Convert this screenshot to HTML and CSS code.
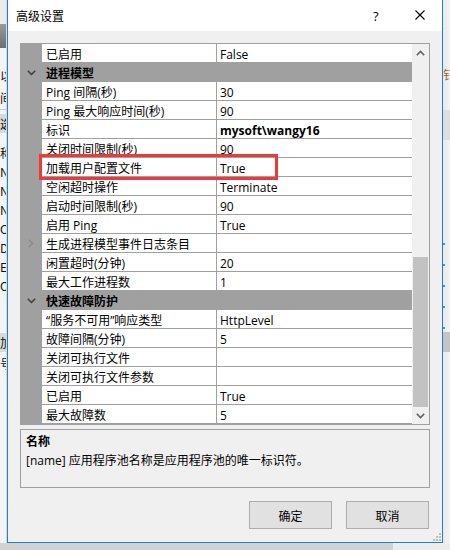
FILE: index.html
```html
<!DOCTYPE html>
<html lang="zh-CN">
<head>
<meta charset="utf-8">
<title>高级设置</title>
<link rel="stylesheet" href="styles.css">
</head>
<body>
<div class="screen">
  <div class="main">
    <div class="bg-left">
      <div class="bl-top"></div>
      <div class="bl-icon"></div>
      <div class="bl-gap1"></div>
      <div class="bl-line">以</div>
      <div class="bl-line bl-mt3">间</div>
      <div class="bl-sep"></div>
      <div class="bl-line bl-sel">选:</div>
      <div class="bl-line bl-mt10">称</div>
      <div class="bl-line">N</div>
      <div class="bl-line">N</div>
      <div class="bl-line">N</div>
      <div class="bl-line">Cl</div>
      <div class="bl-line">Do</div>
      <div class="bl-line">EF</div>
      <div class="bl-line">O</div>
      <div class="bl-line bl-sel bl-mt38">加</div>
      <div class="bl-line bl-mt2">号</div>
    </div>

    <div class="dialog">
      <div class="titlebar">
        <span class="title">高级设置</span>
        <span class="help">?</span>
        <svg class="close" width="10" height="10" viewBox="0 0 10 10"><path d="M0.5 0.5 L9.5 9.5 M9.5 0.5 L0.5 9.5" stroke="#000" stroke-width="1.1" fill="none"/></svg>
      </div>

      <div class="content">
        <div class="grid">
          <div class="rows">
            <div class="row"><div class="m"></div><div class="n">已启用</div><div class="v">False</div></div>
            <div class="cat"><div class="m"><svg width="9" height="6" viewBox="0 0 9 6"><path d="M0.8 0.8 L4.5 4.5 L8.2 0.8" stroke="#3c3c3c" stroke-width="1.5" fill="none"/></svg></div><div class="ct">进程模型</div></div>
            <div class="row"><div class="m"></div><div class="n">Ping 间隔(秒)</div><div class="v">30</div></div>
            <div class="row"><div class="m"></div><div class="n">Ping 最大响应时间(秒)</div><div class="v">90</div></div>
            <div class="row"><div class="m"></div><div class="n">标识</div><div class="v bold">mysoft\wangy16</div></div>
            <div class="row"><div class="m"></div><div class="n">关闭时间限制(秒)</div><div class="v">90</div></div>
            <div class="row"><div class="m"></div><div class="n">加载用户配置文件</div><div class="v">True</div></div>
            <div class="row"><div class="m"></div><div class="n">空闲超时操作</div><div class="v">Terminate</div></div>
            <div class="row"><div class="m"></div><div class="n">启动时间限制(秒)</div><div class="v">90</div></div>
            <div class="row"><div class="m"></div><div class="n">启用 Ping</div><div class="v">True</div></div>
            <div class="row"><div class="m"><svg width="6" height="9" viewBox="0 0 6 9"><path d="M0.8 0.8 L4.5 4.5 L0.8 8.2" stroke="#8a8a8a" stroke-width="1.5" fill="none"/></svg></div><div class="n">生成进程模型事件日志条目</div><div class="v"></div></div>
            <div class="row"><div class="m"></div><div class="n">闲置超时(分钟)</div><div class="v">20</div></div>
            <div class="row"><div class="m"></div><div class="n">最大工作进程数</div><div class="v">1</div></div>
            <div class="cat"><div class="m"><svg width="9" height="6" viewBox="0 0 9 6"><path d="M0.8 0.8 L4.5 4.5 L8.2 0.8" stroke="#3c3c3c" stroke-width="1.5" fill="none"/></svg></div><div class="ct">快速故障防护</div></div>
            <div class="row"><div class="m"></div><div class="n">“服务不可用”响应类型</div><div class="v">HttpLevel</div></div>
            <div class="row"><div class="m"></div><div class="n">故障间隔(分钟)</div><div class="v">5</div></div>
            <div class="row"><div class="m"></div><div class="n">关闭可执行文件</div><div class="v"></div></div>
            <div class="row"><div class="m"></div><div class="n">关闭可执行文件参数</div><div class="v"></div></div>
            <div class="row"><div class="m"></div><div class="n">已启用</div><div class="v">True</div></div>
            <div class="row"><div class="m"></div><div class="n">最大故障数</div><div class="v">5</div></div>
          </div>
          <div class="scrollbar">
            <div class="sb-btn"><svg width="9" height="6" viewBox="0 0 9 6"><path d="M0.8 5.2 L4.5 1.5 L8.2 5.2" stroke="#606060" stroke-width="1.6" fill="none"/></svg></div>
            <div class="sb-track"><div class="sb-thumb"></div></div>
            <div class="sb-btn"><svg width="9" height="6" viewBox="0 0 9 6"><path d="M0.8 0.8 L4.5 4.5 L8.2 0.8" stroke="#606060" stroke-width="1.6" fill="none"/></svg></div>
          </div>
          <div class="highlight"></div>
        </div>

        <div class="desc">
          <div class="desc-title">名称</div>
          <div class="desc-text">[name] 应用程序池名称是应用程序池的唯一标识符。</div>
        </div>

        <div class="buttons">
          <button class="btn">确定</button>
          <button class="btn">取消</button>
        </div>
      </div>

      <svg class="grip" width="9" height="9" viewBox="0 0 9 9">
        <rect x="7" y="1" width="2" height="2" fill="#bdbdbd"/>
        <rect x="4" y="4" width="2" height="2" fill="#bdbdbd"/>
        <rect x="7" y="4" width="2" height="2" fill="#bdbdbd"/>
        <rect x="1" y="7" width="2" height="2" fill="#bdbdbd"/>
        <rect x="4" y="7" width="2" height="2" fill="#bdbdbd"/>
        <rect x="7" y="7" width="2" height="2" fill="#bdbdbd"/>
      </svg>
    </div>

    <div class="bg-right">
      <div class="br-gap1"></div>
      <div class="br-char">钅</div>
      <div class="br-gap2"></div>
      <div class="br-band"></div>
      <div class="br-gap3"></div>
      <div class="br-tick"></div>
      <div class="br-tick"></div>
      <div class="br-tick"></div>
      <div class="br-tick"></div>
      <div class="br-tick"></div>
      <div class="br-band2"></div>
    </div>
  </div>
  <div class="bg-bottom">
    <div class="bb-left"></div>
    <div class="bb-right"></div>
  </div>
</div>
</body>
</html>
```

FILE: styles.css
```css
* {
  box-sizing: border-box;
  margin: 0;
  padding: 0;
}

html, body {
  width: 450px;
  height: 550px;
  overflow: hidden;
}

body {
  background: #e6e6e6;
  font-family: "Open Sans", "Noto Sans CJK SC", sans-serif;
  font-size: 12px;
  color: #000;
}

.screen {
  width: 450px;
  height: 550px;
  display: flex;
  flex-direction: column;
}

.main {
  display: flex;
  height: 543px;
}

/* background window, left */
.bg-left {
  width: 7px;
  flex: none;
  background: #f4f4f4;
  overflow: hidden;
  display: flex;
  flex-direction: column;
  border-right: 1px solid #d8d8d8;
}

.bl-top {
  height: 24px;
  flex: none;
  background: #ececec;
}

.bl-icon {
  height: 24px;
  flex: none;
  background: linear-gradient(#9a9a9a, #6e6e6e);
}

.bl-gap1 {
  height: 18px;
  flex: none;
}

.bl-line {
  height: 19px;
  flex: none;
  line-height: 19px;
  white-space: nowrap;
  font-family: "Noto Sans CJK SC", sans-serif;
  font-size: 12px;
  color: #111;
}

.bl-mt2 { margin-top: 2px; }
.bl-mt3 { margin-top: 3px; }
.bl-mt10 { margin-top: 10px; }
.bl-mt38 { margin-top: 38px; }

.bl-sep {
  height: 5px;
  flex: none;
  border-top: 1px solid #c8c8c8;
  margin-top: 2px;
}

.bl-sel {
  background: #d9d9d9;
}

/* dialog */
.dialog {
  width: 436px;
  height: 543px;
  flex: none;
  border: 1px solid #1883d7;
  border-top: none;
  background: #f0f0f0;
  display: flex;
  flex-direction: column;
  position: relative;
}

.titlebar {
  height: 31px;
  flex: none;
  background: #fff;
  display: flex;
  align-items: center;
  padding-left: 8px;
}

.title {
  flex: 1;
  font-family: "Noto Sans CJK SC", sans-serif;
  font-size: 12px;
  line-height: 16px;
}

.help {
  width: 8px;
  font-family: "Open Sans", sans-serif;
  font-size: 13px;
  line-height: 16px;
  margin-right: 34px;
}

.close {
  display: block;
  margin-right: 17px;
  margin-top: -1px;
}

.content {
  padding: 12px 12px 0 12px;
  display: flex;
  flex-direction: column;
}

/* property grid */
.grid {
  height: 382px;
  border: 1px solid #a0a0a0;
  display: flex;
  position: relative;
  background: #fff;
}

.rows {
  width: 391px;
  display: flex;
  flex-direction: column;
}

.row {
  height: 19px;
  display: grid;
  grid-template-columns: 21px 175px 195px;
}

.m {
  background: #a0a0a0;
  display: flex;
  align-items: center;
  justify-content: center;
  padding-right: 1px;
}

.n,
.v {
  background: #fff;
  border-bottom: 1px solid #a0a0a0;
  padding-top: 3px;
  line-height: 16px;
  white-space: nowrap;
  overflow: hidden;
}

.n {
  padding-left: 4px;
  border-right: 1px solid #a0a0a0;
}

.v {
  padding-left: 3px;
}

.bold {
  font-weight: 700;
}

.cat {
  height: 19px;
  background: #a0a0a0;
  display: grid;
  grid-template-columns: 21px 1fr;
}

.ct {
  padding-left: 4px;
  padding-top: 3px;
  line-height: 16px;
  font-weight: 700;
  overflow: hidden;
}

.scrollbar {
  width: 17px;
  background: #f0f0f0;
  display: flex;
  flex-direction: column;
}

.sb-btn {
  height: 17px;
  display: flex;
  align-items: center;
  justify-content: center;
}

.sb-track {
  flex: 1;
  display: flex;
  flex-direction: column;
  justify-content: flex-end;
  align-items: center;
}

.sb-thumb {
  width: 15px;
  height: 150px;
  background: #c2c2c2;
}

.highlight {
  position: absolute;
  left: 18px;
  top: 110px;
  width: 239px;
  height: 26px;
  border: 3px solid #ec3a3a;
  pointer-events: none;
}

/* description */
.desc {
  margin-top: 4px;
  height: 59px;
  border: 1px solid #a0a0a0;
  padding: 1px 5px;
  line-height: 20px;
  font-family: "Noto Sans CJK SC", sans-serif;
}

.desc-title {
  font-weight: 700;
}

.desc-text {
  font-family: "Open Sans", "Noto Sans CJK SC", sans-serif;
}

/* buttons */
.buttons {
  margin-top: 13px;
  display: flex;
  justify-content: flex-end;
  gap: 14px;
  padding-right: 1px;
}

.btn {
  width: 83px;
  height: 28px;
  background: #e1e1e1;
  border: 1px solid #adadad;
  font-family: "Noto Sans CJK SC", sans-serif;
  font-size: 12px;
  color: #000;
}

.grip {
  position: absolute;
  right: 1px;
  bottom: 1px;
}

/* background window, right */
.bg-right {
  width: 7px;
  flex: none;
  background: linear-gradient(to right, #e9e9e9, #f3f3f3);
  overflow: hidden;
  display: flex;
  flex-direction: column;
}

.br-gap1 { height: 67px; flex: none; }

.br-char {
  height: 16px;
  flex: none;
  line-height: 16px;
  font-family: "Noto Sans CJK SC", sans-serif;
  font-size: 12px;
  color: #b06010;
  white-space: nowrap;
}

.br-gap2 { height: 27px; flex: none; }

.br-band {
  height: 30px;
  flex: none;
  background: #dedede;
}

.br-gap3 { height: 101px; flex: none; }

.br-tick {
  height: 21px;
  flex: none;
  border-top: 2px solid transparent;
}

.br-tick::before {
  content: "";
  display: block;
  width: 2px;
  height: 2px;
  background: #4a90d9;
}

.br-band2 {
  margin-top: -14px;
  height: 20px;
  flex: none;
  background: #c4c4c4;
}

/* background, bottom */
.bg-bottom {
  height: 7px;
  display: flex;
}

.bb-left {
  width: 393px;
  background: #d2d2d2;
}

.bb-right {
  flex: 1;
  background: #ececec;
}
```
